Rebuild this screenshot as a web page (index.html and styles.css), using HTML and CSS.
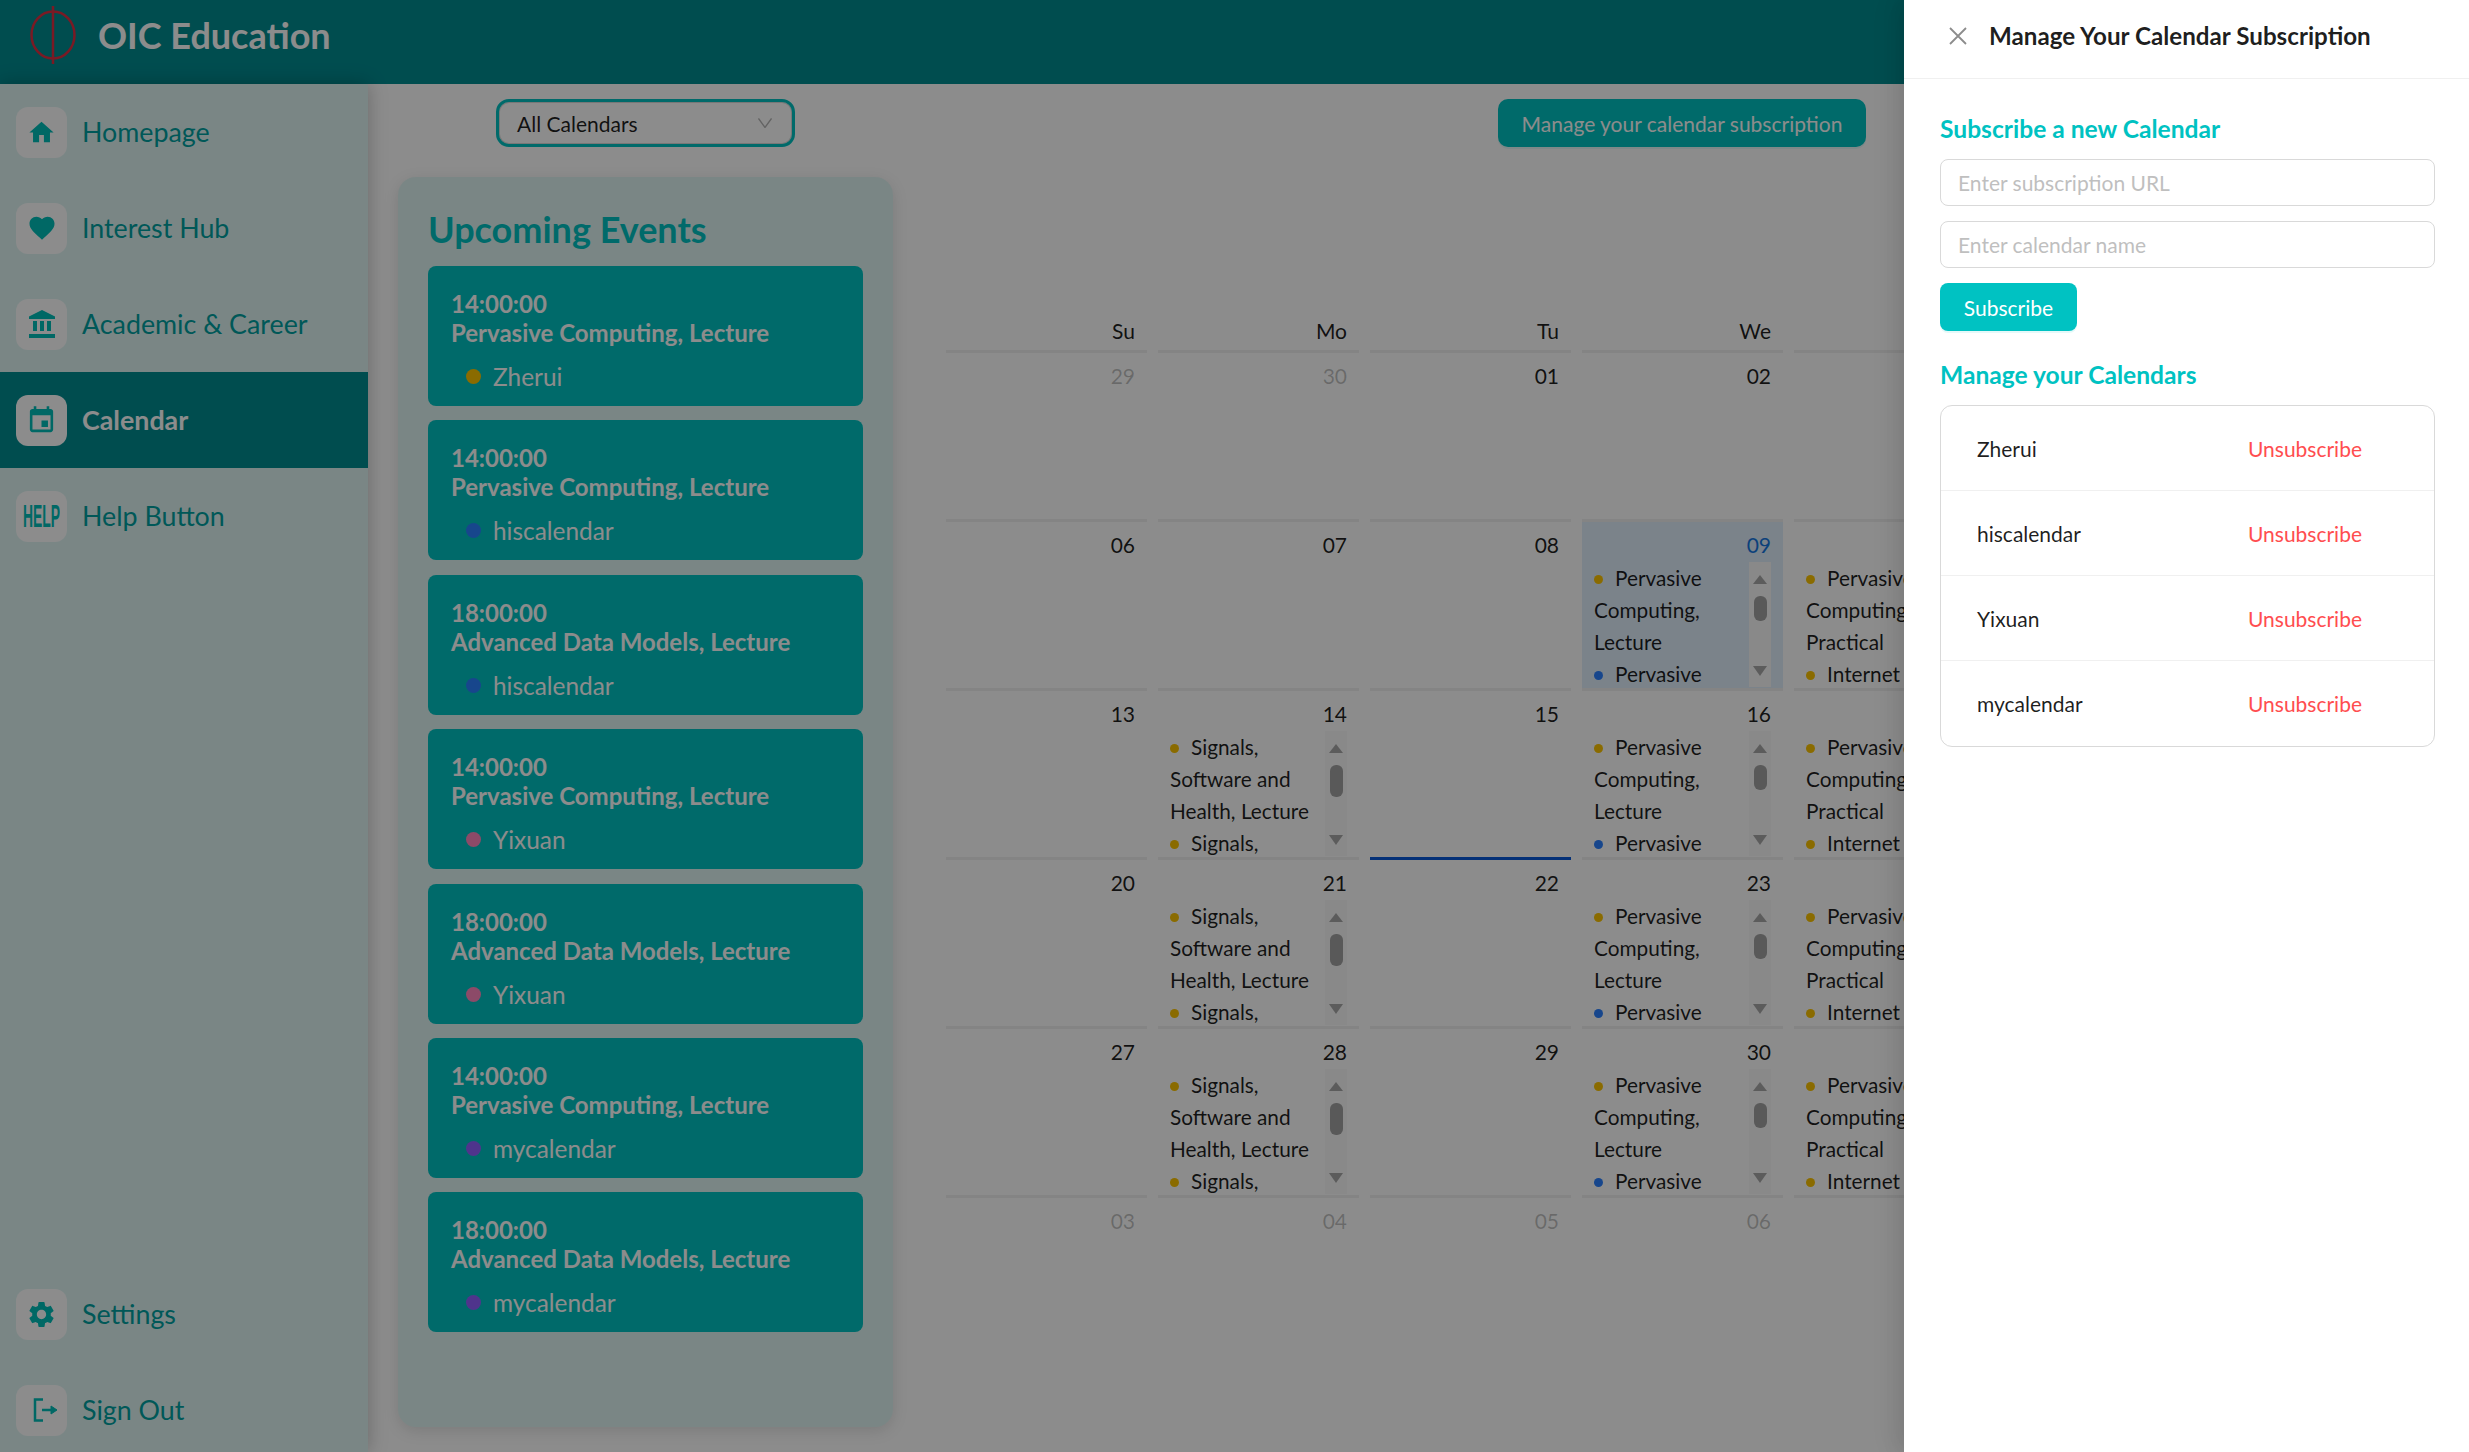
FILE: index.html
```html
<!DOCTYPE html>
<html lang="en">
<head>
    <meta charset="UTF-8">
    <meta name="viewport" content="width=device-width, initial-scale=1.0">
    <title>OIC Education - Calendar</title>
    <link rel="stylesheet" href="styles.css">
</head>
<body>
    <div class="app">
        <header class="topbar">
            <svg class="logo" viewBox="0 0 48 60" width="48" height="60">
                <ellipse cx="24" cy="29" rx="21.5" ry="23.5" fill="none" stroke="#de3042" stroke-width="2.5"></ellipse>
                <path d="M24 0v58" stroke="#de3042" stroke-width="2.5"></path>
            </svg>
            <span class="brand">OIC Education</span>
        </header>

        <div class="content">
            <nav class="sidebar">
                <ul class="nav-list">
                    <li class="nav-item">
                        <span class="nav-icon"><svg viewBox="0 0 24 24" width="29" height="29"><path d="M10 20v-6h4v6h5v-8h3L12 3 2 12h3v8z"></path></svg></span>
                        Homepage
                    </li>
                    <li class="nav-item">
                        <span class="nav-icon"><svg viewBox="0 0 24 24" width="30" height="30"><path d="M12 21.35l-1.45-1.32C5.4 15.36 2 12.28 2 8.5 2 5.42 4.42 3 7.5 3c1.74 0 3.41.81 4.5 2.09C13.09 3.81 14.76 3 16.5 3 19.58 3 22 5.42 22 8.5c0 3.78-3.4 6.86-8.55 11.54L12 21.35z"></path></svg></span>
                        Interest Hub
                    </li>
                    <li class="nav-item">
                        <span class="nav-icon"><svg viewBox="0 0 26 28" width="26" height="28"><path d="M13 0L0 6.5V9h26V6.500z"></path><path d="M4 11h4v10H4zM11 11h4v10h-4zM18 11h4v10h-4zM0 24h26v4H0z"></path></svg></span>
                        Academic &amp; Career
                    </li>
                    <li class="nav-item active">
                        <span class="nav-icon"><svg viewBox="0 0 24 24" width="31" height="31"><path d="M17 12h-5v5h5v-5zM16 1v2H8V1H6v2H5c-1.110 0-1.990.9-1.990 2L3 19c0 1.100.89 2 2 2h14c1.100 0 2-.9 2-2V5c0-1.100-.9-2-2-2h-1V1h-2zm3 18H5V8h14v11z"></path></svg></span>
                        Calendar
                    </li>
                    <li class="nav-item">
                        <span class="nav-icon"><svg viewBox="0 0 37 24" width="37" height="24"><text class="help-glyph" x="0" y="23" textLength="37" lengthAdjust="spacingAndGlyphs">HELP</text></svg></span>
                        Help Button
                    </li>
                </ul>
                <ul class="nav-list nav-bottom">
                    <li class="nav-item">
                        <span class="nav-icon"><svg viewBox="0 0 24 24" width="31" height="31"><path d="M19.140 12.940c.04-.3.06-.61.06-.94 0-.32-.02-.64-.07-.94l2.030-1.580c.18-.14.23-.41.12-.61l-1.920-3.320c-.12-.22-.37-.29-.59-.22l-2.390.96c-.5-.38-1.030-.7-1.620-.94l-.36-2.540c-.04-.24-.24-.41-.48-.41h-3.840c-.24 0-.43.17-.47.41l-.36 2.540c-.59.24-1.130.57-1.620.94l-2.390-.96c-.22-.08-.47 0-.59.22L2.740 8.870c-.12.21-.08.47.12.61l2.030 1.580c-.05.3-.09.63-.09.94s.02.64.07.94l-2.030 1.580c-.18.14-.23.41-.12.61l1.920 3.320c.12.22.37.29.59.22l2.390-.96c.5.38 1.030.7 1.620.94l.36 2.540c.05.24.24.41.48.41h3.840c.24 0 .44-.17.47-.41l.36-2.540c.59-.24 1.130-.56 1.620-.94l2.390.96c.22.08.47 0 .59-.22l1.920-3.320c.12-.22.07-.47-.12-.61l-2.010-1.580zM12 15.600c-1.980 0-3.600-1.620-3.600-3.600s1.620-3.600 3.600-3.600 3.600 1.620 3.600 3.600-1.620 3.600-3.600 3.600z"></path></svg></span>
                        Settings
                    </li>
                    <li class="nav-item">
                        <span class="nav-icon"><svg class="signout" viewBox="0 0 24 24" width="24" height="24"><path d="M10 1.500H2v21h8" fill="none" stroke-width="2.500"></path><path d="M9 12h10" fill="none" stroke-width="2.500"></path><path d="M18 8l6 4-6 4z"></path></svg></span>
                        Sign Out
                    </li>
                </ul>
            </nav>

            <main class="main">
                <section class="events-col">
                    <div class="select-box">
                        <span>All Calendars</span>
                        <svg viewBox="0 0 14 10" width="14" height="10"><path d="M.5.500L7 9.500 13.500.5" fill="none" stroke="#b5b5b5" stroke-width="1.300"></path></svg>
                    </div>
                    <div class="events-panel">
                        <h2>Upcoming Events</h2>
                        <div class="event-list">
                            <div class="event-card">
                                <div class="event-time">14:00:00</div>
                                <div class="event-title">Pervasive Computing, Lecture</div>
                                <div class="event-owner"><i class="dot dot-yellow"></i>Zherui</div>
                            </div>
                            <div class="event-card">
                                <div class="event-time">14:00:00</div>
                                <div class="event-title">Pervasive Computing, Lecture</div>
                                <div class="event-owner"><i class="dot dot-blue"></i>hiscalendar</div>
                            </div>
                            <div class="event-card">
                                <div class="event-time">18:00:00</div>
                                <div class="event-title">Advanced Data Models, Lecture</div>
                                <div class="event-owner"><i class="dot dot-blue"></i>hiscalendar</div>
                            </div>
                            <div class="event-card">
                                <div class="event-time">14:00:00</div>
                                <div class="event-title">Pervasive Computing, Lecture</div>
                                <div class="event-owner"><i class="dot dot-pink"></i>Yixuan</div>
                            </div>
                            <div class="event-card">
                                <div class="event-time">18:00:00</div>
                                <div class="event-title">Advanced Data Models, Lecture</div>
                                <div class="event-owner"><i class="dot dot-pink"></i>Yixuan</div>
                            </div>
                            <div class="event-card">
                                <div class="event-time">14:00:00</div>
                                <div class="event-title">Pervasive Computing, Lecture</div>
                                <div class="event-owner"><i class="dot dot-purple"></i>mycalendar</div>
                            </div>
                            <div class="event-card">
                                <div class="event-time">18:00:00</div>
                                <div class="event-title">Advanced Data Models, Lecture</div>
                                <div class="event-owner"><i class="dot dot-purple"></i>mycalendar</div>
                            </div>
                        </div>
                    </div>
                </section>

                <section class="calendar-col">
                    <div class="toolbar">
                        <button class="manage-btn" type="button">Manage your calendar subscription</button>
                    </div>
                    <div class="calendar">
                        <div class="cal-head">Su</div>
                        <div class="cal-head">Mo</div>
                        <div class="cal-head">Tu</div>
                        <div class="cal-head">We</div>
                        <div class="cal-head">Th</div>

                        <div class="cell muted"><div class="date">29</div></div>
                        <div class="cell muted"><div class="date">30</div></div>
                        <div class="cell"><div class="date">01</div></div>
                        <div class="cell"><div class="date">02</div></div>
                        <div class="cell"><div class="date">03</div></div>

                        <div class="cell"><div class="date">06</div></div>
                        <div class="cell"><div class="date">07</div></div>
                        <div class="cell"><div class="date">08</div></div>
                        <div class="cell selected">
                            <div class="date">09</div>
                            <div class="cell-events">
                                <ul>
                                    <li><i class="mini-dot dot-yellow"></i>Pervasive Computing, Lecture</li>
                                    <li><i class="mini-dot dot-blue"></i>Pervasive Computing, Lecture</li>
                                </ul>
                                <div class="scroll"><b class="up"></b><b class="thumb"></b><b class="down"></b></div>
                            </div>
                        </div>
                        <div class="cell">
                            <div class="date">10</div>
                            <div class="cell-events">
                                <ul>
                                    <li><i class="mini-dot dot-yellow"></i>Pervasive Computing, Practical</li>
                                    <li><i class="mini-dot dot-yellow"></i>Internet Computing, Lecture</li>
                                </ul>
                            </div>
                        </div>

                        <div class="cell"><div class="date">13</div></div>
                        <div class="cell">
                            <div class="date">14</div>
                            <div class="cell-events">
                                <ul>
                                    <li><i class="mini-dot dot-yellow"></i>Signals, Software and Health, Lecture</li>
                                    <li><i class="mini-dot dot-yellow"></i>Signals, Software and Health, Practical</li>
                                </ul>
                                <div class="scroll long"><b class="up"></b><b class="thumb"></b><b class="down"></b></div>
                            </div>
                        </div>
                        <div class="cell"><div class="date">15</div></div>
                        <div class="cell">
                            <div class="date">16</div>
                            <div class="cell-events">
                                <ul>
                                    <li><i class="mini-dot dot-yellow"></i>Pervasive Computing, Lecture</li>
                                    <li><i class="mini-dot dot-blue"></i>Pervasive Computing, Lecture</li>
                                </ul>
                                <div class="scroll"><b class="up"></b><b class="thumb"></b><b class="down"></b></div>
                            </div>
                        </div>
                        <div class="cell">
                            <div class="date">17</div>
                            <div class="cell-events">
                                <ul>
                                    <li><i class="mini-dot dot-yellow"></i>Pervasive Computing, Practical</li>
                                    <li><i class="mini-dot dot-yellow"></i>Internet Computing, Lecture</li>
                                </ul>
                            </div>
                        </div>

                        <div class="cell"><div class="date">20</div></div>
                        <div class="cell">
                            <div class="date">21</div>
                            <div class="cell-events">
                                <ul>
                                    <li><i class="mini-dot dot-yellow"></i>Signals, Software and Health, Lecture</li>
                                    <li><i class="mini-dot dot-yellow"></i>Signals, Software and Health, Practical</li>
                                </ul>
                                <div class="scroll long"><b class="up"></b><b class="thumb"></b><b class="down"></b></div>
                            </div>
                        </div>
                        <div class="cell today"><div class="date">22</div></div>
                        <div class="cell">
                            <div class="date">23</div>
                            <div class="cell-events">
                                <ul>
                                    <li><i class="mini-dot dot-yellow"></i>Pervasive Computing, Lecture</li>
                                    <li><i class="mini-dot dot-blue"></i>Pervasive Computing, Lecture</li>
                                </ul>
                                <div class="scroll"><b class="up"></b><b class="thumb"></b><b class="down"></b></div>
                            </div>
                        </div>
                        <div class="cell">
                            <div class="date">24</div>
                            <div class="cell-events">
                                <ul>
                                    <li><i class="mini-dot dot-yellow"></i>Pervasive Computing, Practical</li>
                                    <li><i class="mini-dot dot-yellow"></i>Internet Computing, Lecture</li>
                                </ul>
                            </div>
                        </div>

                        <div class="cell"><div class="date">27</div></div>
                        <div class="cell">
                            <div class="date">28</div>
                            <div class="cell-events">
                                <ul>
                                    <li><i class="mini-dot dot-yellow"></i>Signals, Software and Health, Lecture</li>
                                    <li><i class="mini-dot dot-yellow"></i>Signals, Software and Health, Practical</li>
                                </ul>
                                <div class="scroll long"><b class="up"></b><b class="thumb"></b><b class="down"></b></div>
                            </div>
                        </div>
                        <div class="cell"><div class="date">29</div></div>
                        <div class="cell">
                            <div class="date">30</div>
                            <div class="cell-events">
                                <ul>
                                    <li><i class="mini-dot dot-yellow"></i>Pervasive Computing, Lecture</li>
                                    <li><i class="mini-dot dot-blue"></i>Pervasive Computing, Lecture</li>
                                </ul>
                                <div class="scroll"><b class="up"></b><b class="thumb"></b><b class="down"></b></div>
                            </div>
                        </div>
                        <div class="cell">
                            <div class="date">31</div>
                            <div class="cell-events">
                                <ul>
                                    <li><i class="mini-dot dot-yellow"></i>Pervasive Computing, Practical</li>
                                    <li><i class="mini-dot dot-yellow"></i>Internet Computing, Lecture</li>
                                </ul>
                            </div>
                        </div>

                        <div class="cell muted"><div class="date">03</div></div>
                        <div class="cell muted"><div class="date">04</div></div>
                        <div class="cell muted"><div class="date">05</div></div>
                        <div class="cell muted"><div class="date">06</div></div>
                        <div class="cell muted"><div class="date">07</div></div>
                    </div>
                </section>
            </main>
        </div>

        <div class="mask"></div>

        <aside class="drawer">
            <div class="drawer-header">
                <svg viewBox="0 0 18 18" width="18" height="18"><path d="M1 1l16 16M17 1L1 17" stroke="#8c8c8c" stroke-width="1.800" fill="none"></path></svg>
                <span class="drawer-title">Manage Your Calendar Subscription</span>
            </div>
            <div class="drawer-body">
                <h3>Subscribe a new Calendar</h3>
                <input class="field" type="text" placeholder="Enter subscription URL">
                <input class="field" type="text" placeholder="Enter calendar name">
                <button class="subscribe-btn" type="button">Subscribe</button>
                <h3 class="manage-title">Manage your Calendars</h3>
                <ul class="sub-list">
                    <li><span>Zherui</span><a href="#">Unsubscribe</a></li>
                    <li><span>hiscalendar</span><a href="#">Unsubscribe</a></li>
                    <li><span>Yixuan</span><a href="#">Unsubscribe</a></li>
                    <li><span>mycalendar</span><a href="#">Unsubscribe</a></li>
                </ul>
            </div>
        </aside>
    </div>
</body>
</html>
```

FILE: styles.css
```css
* {
    box-sizing: border-box;
}
body {
    margin: 0;
    font-family: Lato, "Open Sans", sans-serif;
    color: rgba(0, 0, 0, 0.88);
    background-color: #fff;
}
ul {
    list-style: none;
    margin: 0;
    padding: 0;
}
.app {
    position: relative;
    height: 100vh;
    overflow: hidden;
    display: flex;
    flex-direction: column;
}

/* top bar */
.topbar {
    height: 84px;
    flex-shrink: 0;
    display: flex;
    align-items: flex-start;
    padding: 6px 0 0 29px;
    background-color: #008c91;
}
.brand {
    margin: 7px 0 0 21px;
    color: #fff;
    font-size: 36px;
    font-weight: 700;
}

/* sidebar */
.content {
    flex: 1;
    display: flex;
    min-height: 0;
}
.sidebar {
    width: 368px;
    flex-shrink: 0;
    display: flex;
    flex-direction: column;
    justify-content: space-between;
    background-color: #dff5f3;
    box-shadow: 0 0 18px rgba(0, 0, 0, 0.25);
}
.nav-bottom {
    margin-bottom: -6px;
}
.nav-item {
    height: 96px;
    display: flex;
    align-items: center;
    gap: 15px;
    padding-left: 16px;
    font-size: 26.8px;
    line-height: 34px;
    color: #00a0a0;
}
.nav-item.active {
    background-color: #008c91;
    color: #fff;
    font-weight: 700;
}
.nav-icon {
    width: 51px;
    height: 51px;
    border-radius: 12px;
    display: flex;
    align-items: center;
    justify-content: center;
    background-color: #fff;
}
.nav-icon svg {
    fill: #00bdb8;
}
.help-glyph {
    font-family: "Liberation Sans", sans-serif;
    font-weight: 700;
    font-size: 32px;
}
.signout {
    stroke: #00bdb8;
    margin-left: 6px;
}

/* main area */
.main {
    flex: 1;
    display: flex;
    min-width: 0;
    overflow: hidden;
    padding: 15px 0 0 30px;
}
.events-col {
    width: 495px;
    flex-shrink: 0;
}
.select-box {
    width: 299px;
    height: 48px;
    margin: 0 auto;
    padding: 0 20px 0 18px;
    display: flex;
    align-items: center;
    justify-content: space-between;
    border: 3px solid #00c2c2;
    border-radius: 13px;
    box-shadow: inset 0 0 0 1px #d9d9d9;
    font-size: 21px;
    background-color: #fff;
}
.events-panel {
    height: 1250px;
    margin-top: 30px;
    padding: 30px 30px 0;
    border-radius: 18px;
    background-color: #dff5f3;
    box-shadow: 0 4px 16px rgba(0, 0, 0, 0.12);
}
.events-panel h2 {
    margin: 0 0 15px;
    height: 44px;
    line-height: 44px;
    font-size: 36px;
    font-weight: 700;
    color: #00c2c2;
}
.event-list {
    display: flex;
    flex-direction: column;
    gap: 14.4px;
}
.event-card {
    height: 140px;
    padding: 23px 23px 0;
    border-radius: 8px;
    background-color: #00c2c2;
    color: #fff;
    font-size: 24px;
    line-height: 29px;
}
.event-time,
.event-title {
    font-weight: 700;
}
.event-owner {
    display: flex;
    align-items: center;
    margin-top: 15px;
    padding-left: 15px;
    font-size: 24.4px;
}
.dot {
    width: 15px;
    height: 15px;
    border-radius: 50%;
    margin-right: 12px;
}
.dot-yellow {
    background-color: #fcc400;
}
.dot-blue {
    background-color: #2a80ff;
}
.dot-pink {
    background-color: #ff87bd;
}
.dot-purple {
    background-color: #9060ff;
}

/* calendar */
.calendar-col {
    margin-left: 53px;
    width: 920px;
    flex-shrink: 0;
}
.toolbar {
    display: flex;
    justify-content: flex-end;
}
.manage-btn {
    width: 368px;
    height: 48px;
    border: none;
    border-radius: 10px;
    background-color: #00c2c2;
    color: #fff;
    font-family: inherit;
    font-size: 21px;
    box-shadow: 0 2px 0 rgba(0, 194, 194, 0.1);
}
.calendar {
    display: grid;
    grid-template-columns: repeat(5, 201px);
    column-gap: 11px;
    margin-top: 170px;
}
.cal-head {
    height: 33px;
    line-height: 28px;
    padding-right: 12px;
    text-align: right;
    font-size: 21px;
}
.cell {
    height: 169px;
    border-top: 3px solid #f0f0f0;
    padding: 7px 12px 0;
    overflow: hidden;
}
.cell.selected {
    background-color: #e0eefc;
}
.cell.selected .date {
    color: #1677e0;
}
.cell.today {
    border-top-color: #0958d9;
}
.cell.muted .date {
    color: rgba(0, 0, 0, 0.25);
}
.date {
    height: 33px;
    line-height: 32px;
    text-align: right;
    font-size: 21px;
}
.cell-events {
    display: flex;
    height: 126px;
    overflow: hidden;
    font-size: 20.8px;
    line-height: 32px;
}
.cell-events ul {
    flex: 1;
    min-width: 0;
}
.mini-dot {
    display: inline-block;
    width: 9px;
    height: 9px;
    border-radius: 50%;
    margin: 0 12px 2px 0;
}
.scroll {
    width: 22px;
    flex-shrink: 0;
    height: 125px;
    display: flex;
    flex-direction: column;
    align-items: center;
    padding-top: 13px;
    background-color: #fafafa;
}
.scroll b {
    display: block;
}
.scroll .up {
    border: 7.5px solid transparent;
    border-top: none;
    border-bottom: 9px solid #a8a8a8;
}
.scroll .thumb {
    width: 13px;
    height: 25px;
    margin-top: 12px;
    border-radius: 6px;
    background-color: #a3a3a3;
}
.scroll .down {
    margin-top: 45px;
    border: 7.5px solid transparent;
    border-bottom: none;
    border-top: 10px solid #a8a8a8;
}
.scroll.long .thumb {
    height: 32px;
}
.scroll.long .down {
    margin-top: 38px;
}

/* overlay and drawer */
.mask {
    position: absolute;
    inset: 0;
    background-color: rgba(0, 0, 0, 0.45);
}
.drawer {
    position: absolute;
    top: 0;
    right: 0;
    bottom: 0;
    width: 565px;
    background-color: #fff;
    box-shadow: -6px 0 16px rgba(0, 0, 0, 0.08), -9px 0 28px rgba(0, 0, 0, 0.05);
}
.drawer-header {
    height: 79px;
    display: flex;
    align-items: center;
    gap: 22px;
    padding: 0 0 7px 45px;
    border-bottom: 1px solid #f0f0f0;
}
.drawer-title {
    font-size: 24.2px;
    font-weight: 700;
}
.drawer-body {
    padding: 0 34px 0 36px;
}
.drawer-body h3 {
    margin: 0;
    padding-top: 34px;
    height: 80px;
    line-height: 32px;
    font-size: 24.6px;
    font-weight: 700;
    color: #00c2c2;
}
.field {
    display: block;
    width: 100%;
    height: 47px;
    margin-bottom: 15px;
    padding: 0 17px;
    border: 1px solid #d9d9d9;
    border-radius: 8px;
    font-family: inherit;
    font-size: 21px;
}
.field::placeholder {
    color: #bfbfbf;
}
.subscribe-btn {
    display: block;
    width: 137px;
    height: 48px;
    border: none;
    border-radius: 8px;
    background-color: #00c2c2;
    color: #fff;
    font-family: inherit;
    font-size: 21px;
    box-shadow: 0 2px 0 rgba(0, 194, 194, 0.1);
}
.drawer-body h3.manage-title {
    padding-top: 28px;
    height: 74px;
}
.sub-list {
    border: 1px solid #d9d9d9;
    border-radius: 12px;
}
.sub-list li {
    height: 85px;
    display: flex;
    align-items: center;
    justify-content: space-between;
    padding: 0 72px 0 36px;
    border-bottom: 1px solid #f0f0f0;
    font-size: 21px;
}
.sub-list li:last-child {
    border-bottom: none;
}
.sub-list a {
    color: #ff4d4f;
    text-decoration: none;
}
```
